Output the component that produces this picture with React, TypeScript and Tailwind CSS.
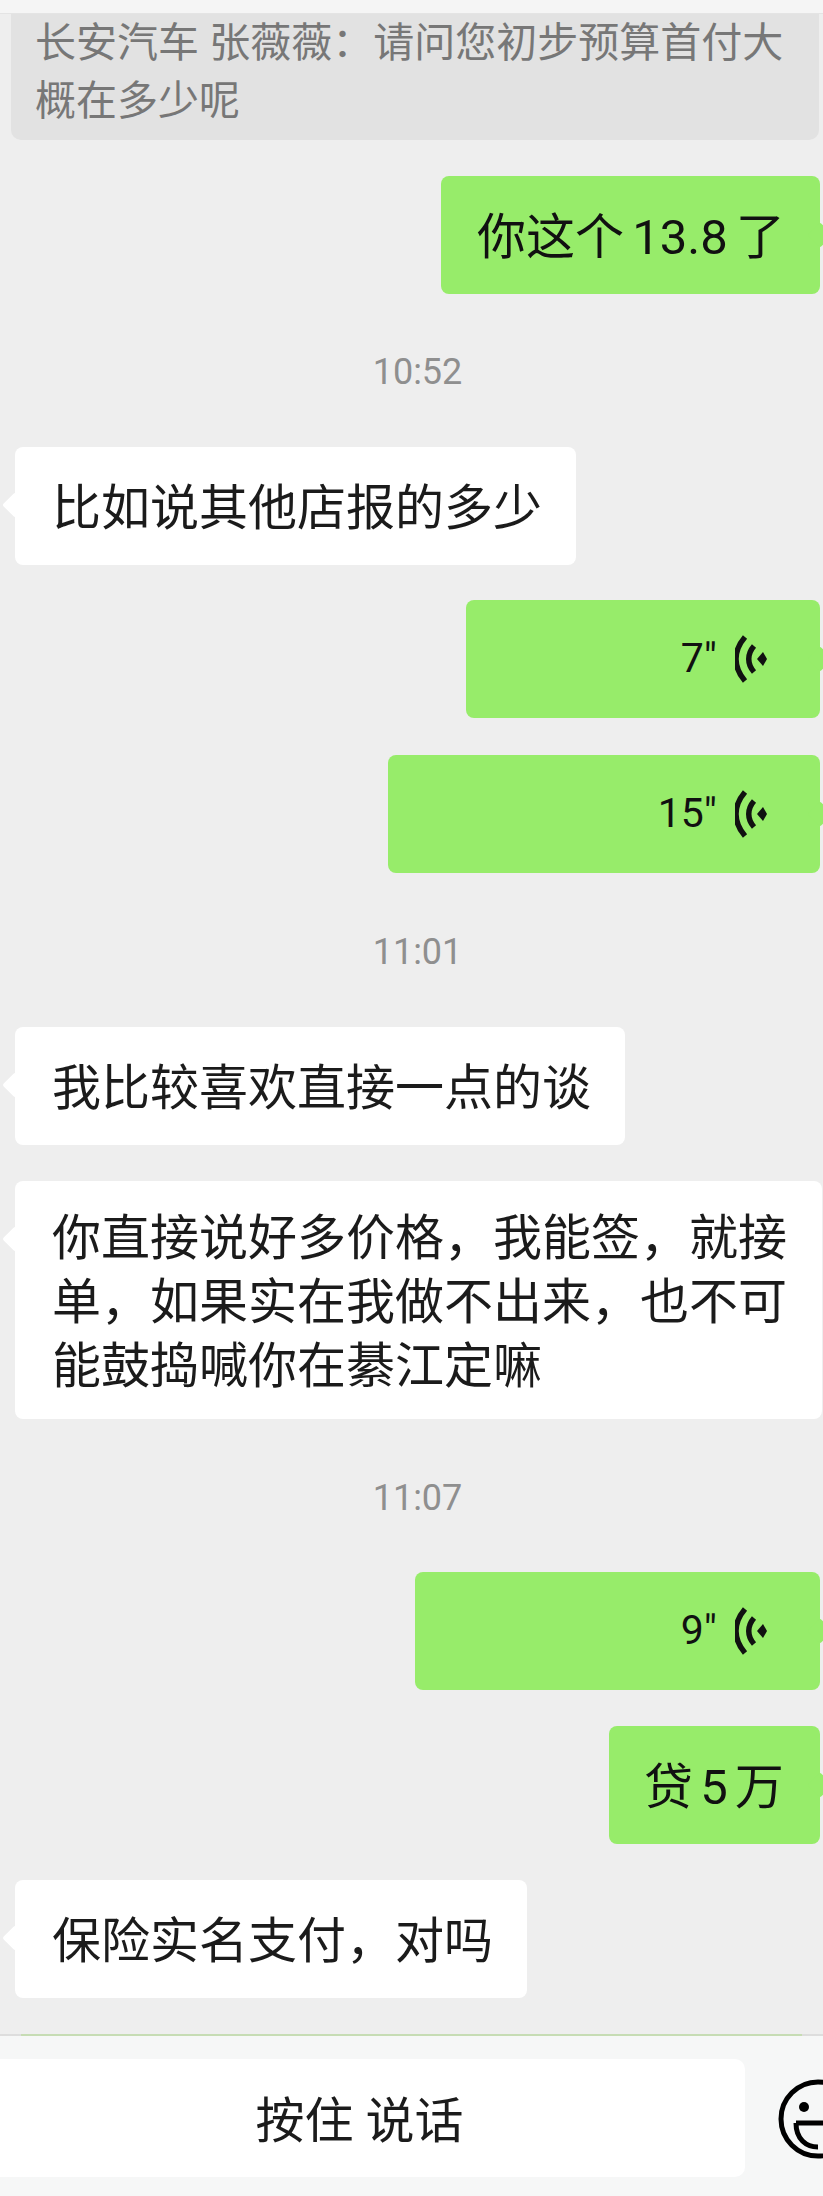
const font = { fontFamily: '"Roboto", "Noto Sans CJK SC", sans-serif' };

const Tail = ({ side }: { side: "left" | "right" }) =>
  side === "left" ? (
    <span className="absolute -left-[9px] top-[49px] w-[18px] h-[18px] rotate-45 bg-white rounded-[2px]" />
  ) : (
    <span className="absolute -right-[9px] top-[50px] w-[18px] h-[18px] rotate-45 bg-[#97ec6a] rounded-[2px] -z-10" />
  );

const Left = ({ children, className = "" }: { children: React.ReactNode; className?: string }) => (
  <div className={"relative self-start ml-[15px] bg-white rounded-[8px] pl-[37px] pr-[16px] text-[49px] leading-[64px] text-[#1b1b1b] " + className}>
    <Tail side="left" />
    <div className="translate-y-[3px]">{children}</div>
  </div>
);

const Right = ({ children, className = "" }: { children: React.ReactNode; className?: string }) => (
  <div className={"relative z-0 self-end mr-[3px] bg-[#97ec6a] rounded-[8px] h-[118px] flex items-center text-[#111] " + className}>
    <Tail side="right" />
    {children}
  </div>
);

const VoiceIcon = () => (
  <svg width="32" height="48" viewBox="0 0 32 48" fill="none" stroke="#111" strokeWidth="5.5">
    <path d="M10 2 C-2 16 -2 32 10 46" />
    <path d="M19 11 C12 19 12 29 19 37" />
    <path d="M22 24 L28 17 L32 24 L28 31 Z" fill="#111" stroke="none" />
  </svg>
);

const Voice = ({ sec, width }: { sec: string; width: string }) => (
  <Right className={"justify-end pr-[53px] " + width}>
    <span className="text-[41px] mr-[18px]">{sec}"</span>
    <VoiceIcon />
  </Right>
);

const Time = ({ t, className }: { t: string; className: string }) => (
  <div className={"self-center ml-[12px] text-[36px] leading-[40px] text-[#8f8f8f] translate-y-[1px] " + className}>{t}</div>
);

export default function App() {
  return (
    <div style={font} className="w-[823px] h-[2196px] overflow-hidden flex flex-col bg-[#eeeeee]">
      <div className="h-[14px] shrink-0 bg-[#f5f5f5] border-b border-[#e4e4e4]" />
      <div className="flex-1 flex flex-col">
        <div className="mr-[4px] ml-[11px] h-[126px] bg-[#e2e2e2] rounded-b-[10px] pl-[24px] text-[41px] leading-[58px] text-[#777]">
          长安汽车 张薇薇：请问您初步预算首付大概在多少呢
        </div>

        <Right className="mt-[36px] w-[379px] pl-[36px] text-[49px] whitespace-nowrap [word-spacing:-4px]">
          <span className="translate-y-[3px]">你这个 13.8 了</span>
        </Right>
        <Time t="10:52" className="mt-[57px]" />
        <Left className="mt-[56px] py-[27px] w-[561px] whitespace-nowrap">比如说其他店报的多少</Left>
        <div className="mt-[35px] flex flex-col">
          <Voice sec="7" width="w-[354px]" />
        </div>
        <div className="mt-[37px] flex flex-col">
          <Voice sec="15" width="w-[432px]" />
        </div>
        <Time t="11:01" className="mt-[58px]" />
        <Left className="mt-[56px] py-[27px] w-[610px] whitespace-nowrap">我比较喜欢直接一点的谈</Left>
        <Left className="mt-[36px] py-[23px] w-[807px]">你直接说好多价格，我能签，就接单，如果实在我做不出来，也不可能鼓捣喊你在綦江定嘛</Left>
        <Time t="11:07" className="mt-[58px]" />
        <div className="mt-[55px] flex flex-col">
          <Voice sec="9" width="w-[405px]" />
        </div>
        <Right className="mt-[36px] w-[211px] pl-[35px] text-[49px] whitespace-nowrap [word-spacing:-5px]">
          <span className="translate-y-[3px]">贷 5 万</span>
        </Right>
        <Left className="mt-[36px] py-[27px] w-[512px] whitespace-nowrap">保险实名支付，对吗</Left>
      </div>

      <div className="h-[162px] shrink-0 bg-[#f6f7f7] flex flex-col">
        <div className="h-[2px] shrink-0 bg-[#dddddd] px-[21px]">
          <div className="h-[2px] bg-[#c6dcb4]" />
        </div>
        <div className="flex items-start mt-[23px]">
          <button className="w-[745px] h-[118px] shrink-0 bg-white rounded-r-[10px] text-[49px] pr-[26px] pt-[7px] text-[#1b1b1b]">按住 说话</button>
          <svg className="ml-[33px] mt-[20px] shrink-0" width="80" height="80" viewBox="0 0 80 80" fill="none" stroke="#000" strokeWidth="5">
            <circle cx="40" cy="40" r="37" />
            <circle cx="26" cy="28" r="5" fill="#000" stroke="none" />
            <path d="M18 44 H70 M18 44 C18 60 28 68 40 68" />
          </svg>
        </div>
      </div>
    </div>
  );
}
